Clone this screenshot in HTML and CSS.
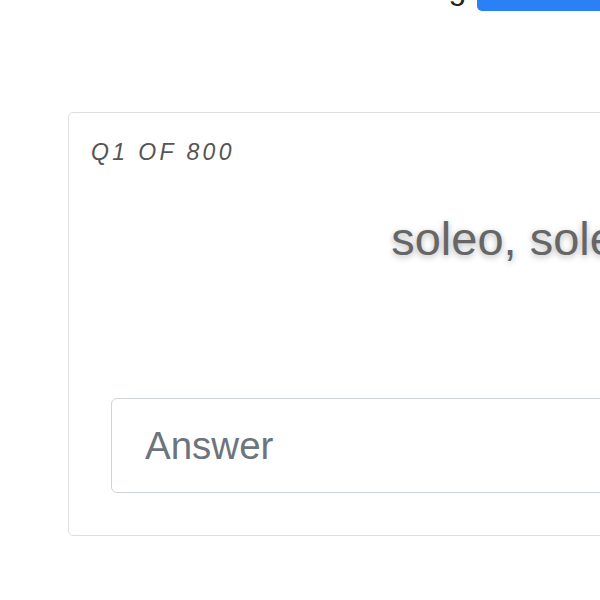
FILE: index.html
```html
<!DOCTYPE html>
<html lang="la">
<head>
<meta charset="utf-8">
<title>Quiz</title>
<link rel="stylesheet" href="styles.css">
</head>
<body>
<main class="page">
  <header class="topbar">
    <h1 class="title">Testing</h1>
    <button class="btn-primary" type="button">Skip question</button>
  </header>
  <section class="card">
    <div class="counter">Q1 of 800</div>
    <div class="prompt">soleo, solere, solitus sum</div>
    <form class="answer-form">
      <input class="answer" type="text" placeholder="Answer">
    </form>
  </section>
</main>
</body>
</html>
```
FILE: styles.css
```css
html, body {
  margin: 0;
  padding: 0;
  overflow: hidden;
  background: #fff;
  font-family: "Liberation Sans", Arial, sans-serif;
}

.page {
  width: 1174px;
  padding-left: 68px;
}

.topbar {
  display: flex;
  align-items: center;
  gap: 11px;
  height: 38px;
  margin-top: -27px;
  padding-left: 297px;
}

.title {
  margin: -8px 0 0 0;
  font-size: 32px;
  font-weight: 400;
  line-height: 37px;
  color: #222;
}

.btn-primary {
  height: 38px;
  padding: 0 16px 16px 24px;
  border: none;
  border-radius: 5px;
  background: #2b80f6;
  color: #fff;
  font-family: "Liberation Sans", Arial, sans-serif;
  font-size: 30px;
  line-height: 22px;
  text-align: left;
  width: 260px;
}

.card {
  margin-top: 101px;
  border: 1px solid #dedede;
  border-radius: 5px;
  padding: 24px 22px 42px;
}

.counter {
  font-size: 23px;
  line-height: 31px;
  font-style: italic;
  letter-spacing: 3.4px;
  text-transform: uppercase;
  color: #555;
}

.prompt {
  margin-top: 44px;
  margin-bottom: 132px;
  text-align: center;
  font-size: 47px;
  line-height: 54px;
  color: #666;
  text-shadow: 0 2px 6px rgba(0, 0, 0, 0.3);
}

.answer-form {
  padding: 0 20px;
}

.answer {
  display: block;
  box-sizing: border-box;
  width: 100%;
  height: 95px;
  padding: 0 33px;
  border: 1px solid #ced4da;
  border-radius: 6px;
  font-family: "Liberation Sans", Arial, sans-serif;
  font-size: 38.5px;
  color: #495057;
  outline: none;
}

.answer::placeholder {
  color: #6c757d;
  opacity: 1;
}
```
